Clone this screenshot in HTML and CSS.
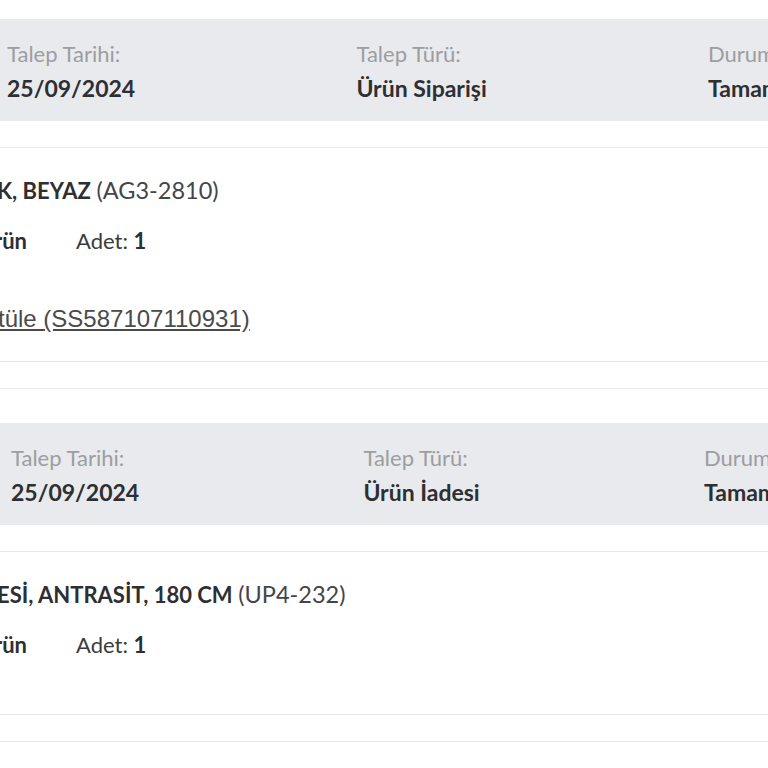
FILE: index.html
```html
<!DOCTYPE html>
<html lang="tr">
<head>
<meta charset="utf-8">
<title>Taleplerim</title>
<link rel="stylesheet" href="styles.css">
</head>
<body>
<main class="page">
  <section class="order">
    <div class="order__head">
      <div class="field">
        <div class="field__label">Talep Tarihi:</div>
        <div class="field__value">25/09/2024</div>
      </div>
      <div class="field">
        <div class="field__label">Talep Türü:</div>
        <div class="field__value">Ürün Siparişi</div>
      </div>
      <div class="field field--last">
        <div class="field__label">Durum:</div>
        <div class="field__value">Tamamlandı</div>
      </div>
    </div>
    <div class="item">
      <div class="item__title"><strong>K, BEYAZ</strong> <span class="item__code">(AG3-2810)</span></div>
      <div class="item__meta">
        <span class="item__kind">rün</span>
        <span class="item__qty">Adet: <strong>1</strong></span>
      </div>
      <a class="item__link" href="#">tüle (SS587107110931)</a>
    </div>
    <div class="order__foot"></div>
  </section>

  <section class="order order--alt">
    <div class="order__head">
      <div class="field">
        <div class="field__label">Talep Tarihi:</div>
        <div class="field__value">25/09/2024</div>
      </div>
      <div class="field">
        <div class="field__label">Talep Türü:</div>
        <div class="field__value">Ürün İadesi</div>
      </div>
      <div class="field field--last">
        <div class="field__label">Durum:</div>
        <div class="field__value">Tamamlandı</div>
      </div>
    </div>
    <div class="item">
      <div class="item__title"><strong>ESİ, ANTRASİT, 180 CM</strong> <span class="item__code">(UP4-232)</span></div>
      <div class="item__meta">
        <span class="item__kind">rün</span>
        <span class="item__qty">Adet: <strong>1</strong></span>
      </div>
    </div>
    <div class="order__foot"></div>
  </section>
</main>
</body>
</html>
```

FILE: styles.css
```css
* {
  box-sizing: border-box;
}

html, body {
  margin: 0;
  padding: 0;
  background: #ffffff;
  overflow: hidden;
}

body {
  font-family: "Lato", "Noto Sans", sans-serif;
  color: #2e2f33;
}

.page {
  width: 1000px;
  padding-top: 19px;
}

.order {
  margin-bottom: 34px;
}

.order__head {
  display: flex;
  justify-content: space-between;
  background: #e8eaed;
  padding: 18px 92px 16px 7px;
}

.order--alt .order__head {
  padding-left: 11px;
  padding-right: 96px;
}

.field__label {
  font-size: 22px;
  line-height: 34px;
  color: #9c9ea1;
}

.field__value {
  font-size: 23px;
  line-height: 34px;
  font-weight: 700;
  color: #2e2f33;
}

.field--last {
  width: 200px;
}

.item {
  margin-top: 26px;
  border-top: 1px solid #e6e7e8;
  border-bottom: 1px solid #e6e7e8;
  padding: 27px 0 27px 0;
}

.item__title {
  font-size: 22px;
  line-height: 30px;
  color: #444548;
  margin-left: -3px;
}

.item__title strong {
  font-weight: 700;
  color: #2e2f33;
}

.item__code {
  font-size: 23.5px;
}

.item__meta {
  display: flex;
  gap: 49px;
  margin-top: 20px;
  font-size: 22px;
  line-height: 30px;
  margin-left: -6px;
}

.item__meta:last-child {
  margin-bottom: 27px;
}

.item__kind {
  font-weight: 700;
  color: #2e2f33;
}

.item__qty {
  color: #3a3b3e;
}

.item__qty strong {
  font-weight: 700;
  color: #2e2f33;
}

.item__link {
  display: block;
  margin-top: 48px;
  margin-left: -2px;
  font-family: "Liberation Sans", Arial, sans-serif;
  font-size: 24px;
  line-height: 30px;
  color: #4a4a4a;
  text-decoration: underline;
}

.order__foot {
  height: 27px;
  border-bottom: 1px solid #e6e7e8;
}
```
